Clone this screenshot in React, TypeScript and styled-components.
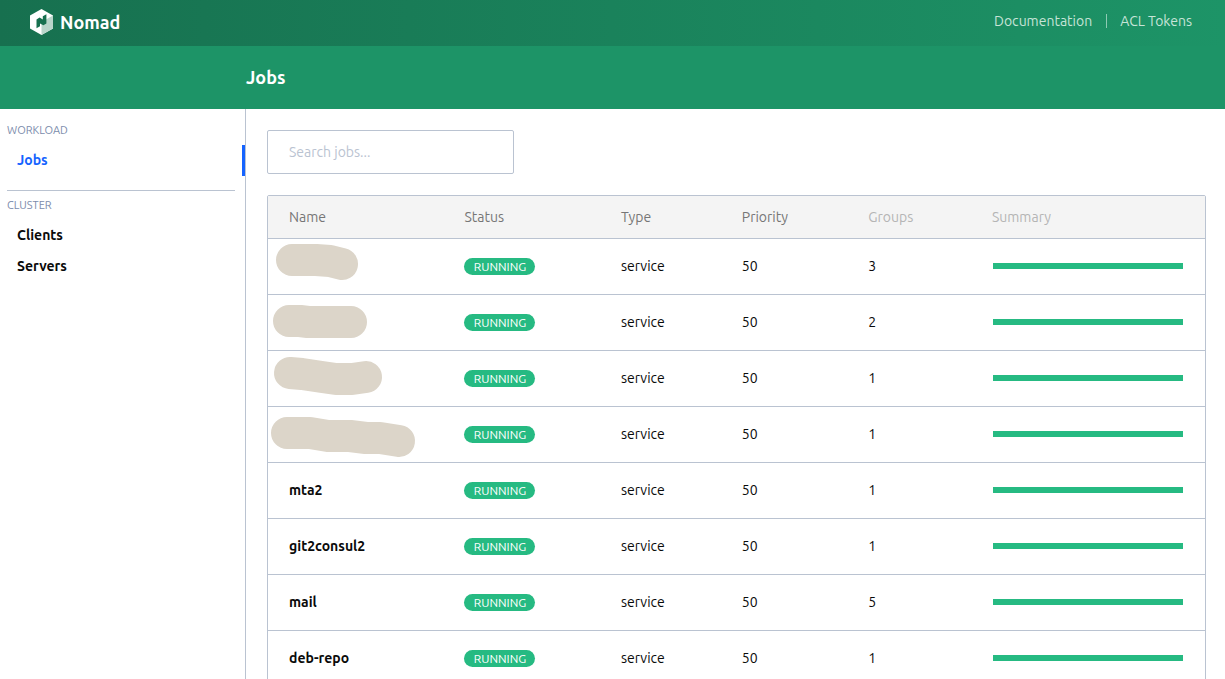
import React, { useState } from "react";
import styled, { createGlobalStyle } from "styled-components";

const colors = {
  brand: "#1d9467",
  brandDark: "#17704f",
  line: "#bac3d1",
  running: "#26ba82",
  link: "#1563ff",
  muted: "#7b8bab",
};

const GlobalStyle = createGlobalStyle`
  *, *::before, *::after { box-sizing: border-box; }
  body {
    margin: 0;
    background: #fff;
    color: #0a0a0a;
    font: 14px/20px Ubuntu, "Noto Sans", sans-serif;
  }
  a { color: inherit; text-decoration: none; }
`;

const Page = styled.div`
  min-height: 100vh;
  display: flex;
  flex-direction: column;
`;

const TopBar = styled.header`
  height: 46px;
  padding: 0 33px 2px 30px;
  display: flex;
  align-items: center;
  justify-content: space-between;
  background: linear-gradient(to right, ${colors.brandDark}, ${colors.brand});
`;

const Brand = styled.a`
  display: flex;
  align-items: center;
  gap: 7px;
  color: #fff;
  font-size: 18px;
  line-height: 44px;
  font-weight: 600;
`;

const TopLinks = styled.nav`
  display: flex;
  align-items: center;
  padding-bottom: 2px;
  color: #c7e4d8;
`;

const TopLink = styled.a`
  & + & {
    margin-left: 14px;
    display: flex;
    align-items: center;
    gap: 13px;
  }
  & + &::before {
    content: "";
    width: 1px;
    height: 14px;
    background: #8ecab3;
  }
`;

const TitleBar = styled.div`
  height: 63px;
  padding: 0 0 2px 246px;
  display: flex;
  align-items: center;
  background: ${colors.brand};
`;

const Title = styled.h1`
  margin: 0;
  color: #fff;
  font-size: 18px;
  line-height: 24px;
  font-weight: 700;
`;

const Columns = styled.div`
  flex: 1;
  display: flex;
`;

const Sidebar = styled.aside`
  flex: 0 0 246px;
  padding-top: 7px;
  border-right: 1px solid ${colors.line};
`;

const MenuGroup = styled.section`
  & + & {
    margin-top: 14px;
  }
  & + &::before {
    content: "";
    display: block;
    height: 1px;
    margin: 0 10px 0 7px;
    background: ${colors.line};
  }
`;

const MenuLabel = styled.h2`
  margin: 0;
  padding-left: 7px;
  color: ${colors.muted};
  font-size: 11px;
  line-height: 29px;
  font-weight: 400;
  text-transform: uppercase;
`;

const MenuLink = styled.a<{ $active?: boolean }>`
  display: block;
  padding-left: 17px;
  border-right: 3px solid ${(p) => (p.$active ? colors.link : "transparent")};
  color: ${(p) => (p.$active ? colors.link : "inherit")};
  line-height: 31px;
  font-weight: 600;
`;

const Content = styled.main`
  flex: 1;
  min-width: 0;
  padding: 21px 19px 21px 21px;
`;

const Search = styled.input`
  display: block;
  width: 247px;
  height: 44px;
  margin-bottom: 21px;
  padding: 0 21px;
  border: 1px solid ${colors.line};
  border-radius: 2px;
  background: #fff;
  color: inherit;
  font: inherit;
  &::placeholder {
    color: ${colors.line};
    opacity: 1;
  }
`;

const JobTable = styled.table`
  width: 100%;
  table-layout: fixed;
  border: 1px solid ${colors.line};
  border-radius: 2px;
  border-spacing: 0;
`;

const Col = styled.col<{ $share?: number }>`
  width: ${(p) => (p.$share ? `${p.$share}%` : "auto")};
`;

const HeadCell = styled.th<{ $dim?: boolean }>`
  height: 43px;
  padding: 0 10px;
  border-bottom: 1px solid ${colors.line};
  background: #f4f4f4;
  color: ${(p) => (p.$dim ? "#b5b5b5" : "#767676")};
  font-weight: 400;
  text-align: left;
  &:first-child { padding-left: 21px; }
`;

const Cell = styled.td`
  height: 56px;
  padding: 0 10px 2px;
  border-bottom: 1px solid ${colors.line};
`;

const StatusCell = styled(Cell)`
  padding-bottom: 0;
`;

const SummaryCell = styled(Cell)`
  padding: 0 22px 2px 11px;
`;

const NameCell = styled(Cell)<{ $redacted?: boolean }>`
  padding: ${(p) => (p.$redacted ? "0" : "0 10px 2px 21px")};
  font-weight: 600;
`;

const Redaction = styled.svg`
  display: block;
  fill: none;
  stroke: #dcd5c9;
  stroke-width: 32px;
  stroke-linecap: round;
  stroke-linejoin: round;
`;

const Badge = styled.span`
  display: block;
  width: 71px;
  border-radius: 9px;
  background: ${colors.running};
  color: #fff;
  font-size: 12px;
  line-height: 17px;
  text-align: center;
  text-transform: uppercase;
`;

const SummaryBar = styled.div`
  height: 6px;
  background: ${colors.running};
`;

type Job = { name?: string; mask?: string; groups: number };

const jobs: Job[] = [
  { mask: "M24 21H48L62 22L74 25", groups: 3 },
  { mask: "M21 26H32L40 27H83", groups: 2 },
  { mask: "M22 22L34 23L54 26L68 28H84L98 26", groups: 1 },
  { mask: "M19 26H42L60 29H82L98 31H112L131 34", groups: 1 },
  { name: "mta2", groups: 1 },
  { name: "git2consul2", groups: 1 },
  { name: "mail", groups: 5 },
  { name: "deb-repo", groups: 1 },
];

function NomadLogo() {
  return (
    <svg width="23" height="26" viewBox="0 0 23 26" aria-hidden="true">
      <path d="M11.5 0L23 6.5V19.5L11.5 26L0 19.5V6.5Z" fill="#fff" />
      <path d="M11.5 13L23 6.5V19.5L11.5 26Z" fill="#b9d5ca" />
      <path
        d="M6.5 10.4L9.6 8.6L12.8 10.6V7.2L16.4 5.2V14.4L13.4 16.2L10 14.4V17.2L6.5 19.2Z"
        fill="#17704f"
      />
    </svg>
  );
}

export default function App() {
  const [query, setQuery] = useState("");
  const visible = jobs.filter((j) => !query || j.name?.includes(query));

  return (
    <Page>
      <GlobalStyle />
      <TopBar>
        <Brand href="#">
          <NomadLogo />
          Nomad
        </Brand>
        <TopLinks>
          <TopLink href="#docs">Documentation</TopLink>
          <TopLink href="#tokens">ACL Tokens</TopLink>
        </TopLinks>
      </TopBar>
      <TitleBar>
        <Title>Jobs</Title>
      </TitleBar>
      <Columns>
        <Sidebar>
          <MenuGroup>
            <MenuLabel>Workload</MenuLabel>
            <MenuLink href="#jobs" $active>Jobs</MenuLink>
          </MenuGroup>
          <MenuGroup>
            <MenuLabel>Cluster</MenuLabel>
            <MenuLink href="#clients">Clients</MenuLink>
            <MenuLink href="#servers">Servers</MenuLink>
          </MenuGroup>
        </Sidebar>
        <Content>
          <Search
            type="text"
            aria-label="Search jobs"
            placeholder="Search jobs..."
            value={query}
            onChange={(e) => setQuery(e.target.value)}
          />
          <JobTable>
            <colgroup>
              <Col $share={19.9} />
              <Col $share={16.7} />
              <Col $share={12.9} />
              <Col $share={13.5} />
              <Col $share={13.2} />
              <Col />
            </colgroup>
            <thead>
              <tr>
                <HeadCell>Name</HeadCell>
                <HeadCell>Status</HeadCell>
                <HeadCell>Type</HeadCell>
                <HeadCell>Priority</HeadCell>
                <HeadCell $dim>Groups</HeadCell>
                <HeadCell $dim>Summary</HeadCell>
              </tr>
            </thead>
            <tbody>
              {visible.map((job, i) => (
                <tr key={i}>
                  <NameCell $redacted={!job.name}>
                    {job.name ?? (
                      <Redaction width="160" height="55" aria-hidden="true">
                        <path d={job.mask} />
                      </Redaction>
                    )}
                  </NameCell>
                  <StatusCell><Badge>Running</Badge></StatusCell>
                  <Cell>service</Cell>
                  <Cell>50</Cell>
                  <Cell>{job.groups}</Cell>
                  <SummaryCell><SummaryBar /></SummaryCell>
                </tr>
              ))}
            </tbody>
          </JobTable>
        </Content>
      </Columns>
    </Page>
  );
}
